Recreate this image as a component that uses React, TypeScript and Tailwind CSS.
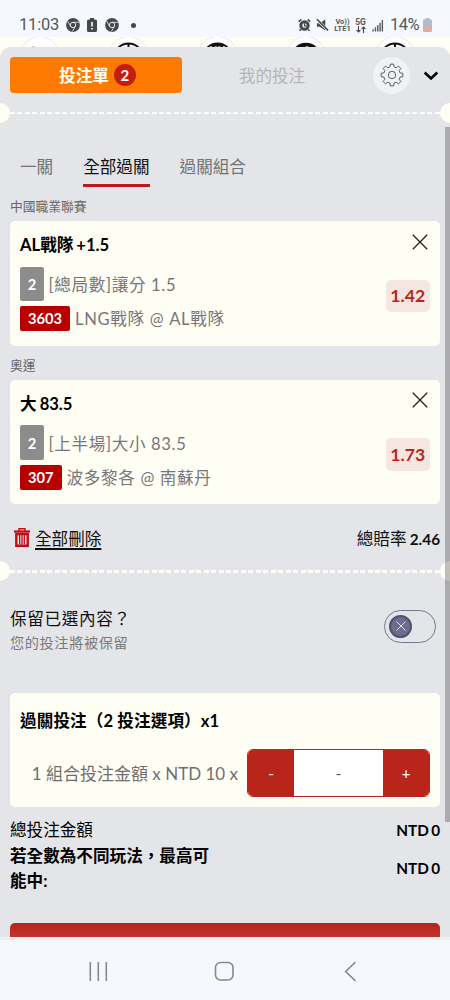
import type { ReactNode } from 'react';

interface Bet {
  league: string;
  pick: string;
  market: string;
  code: string;
  match: string;
  odds: string;
}

const bets: Bet[] = [
  { league: '中國職業聯賽', pick: 'AL戰隊 +1.5', market: '[總局數]讓分 1.5', code: '3603', match: 'LNG戰隊 @ AL戰隊', odds: '1.42' },
  { league: '奧運', pick: '大 83.5', market: '[上半場]大小 83.5', code: '307', match: '波多黎各 @ 南蘇丹', odds: '1.73' },
];

// Eight teeth, four points each: [radius, angle offset in degrees]
const gearPoints = Array.from({ length: 8 }, (_, i) =>
  [[8.4, -14], [11, -9], [11, 9], [8.4, 14]].map(([r, a]) => {
    const rad = ((i * 45 + a) * Math.PI) / 180;
    return `${(12 + r * Math.cos(rad)).toFixed(2)},${(12 + r * Math.sin(rad)).toFixed(2)}`;
  }).join(' ')
).join(' ');

function GearIcon() {
  return (
    <svg width="24" height="24" viewBox="0 0 24 24" fill="none" stroke="#4c4e50" strokeWidth="0.9" strokeLinejoin="round">
      <polygon points={gearPoints} />
      <circle cx="12" cy="12" r="3.7" />
    </svg>
  );
}

function ChromeIcon() {
  return (
    <svg width="14" height="14" viewBox="0 0 14 14" fill="none">
      <circle cx="7" cy="7" r="6.9" fill="#46484b" />
      <circle cx="7" cy="7" r="2.7" stroke="#eef3fa" strokeWidth="0.9" />
      <path d="M7 4.300h6M4.700 8.400 1.700 3.200M9.300 8.400l-3 5.200" stroke="#eef3fa" strokeWidth="0.8" />
    </svg>
  );
}

function StatusBar() {
  return (
    <div className="h-[37px] shrink-0 bg-[#f5f9ff] flex items-center pt-[13px] pl-[19px] pr-[18px] font-[Roboto] text-[16.5px] leading-6 text-[#55575a]">
      <span className="w-[47px] whitespace-nowrap tracking-[-0.2px]">11:03</span>
      <ChromeIcon />
      <svg className="ml-[7px]" width="10" height="14" viewBox="0 0 10 14">
        <path d="M3 0h4v1.500h1.500A1.500 1.500 0 0 1 10 3v9.500A1.500 1.500 0 0 1 8.500 14h-7A1.500 1.500 0 0 1 0 12.500V3a1.500 1.500 0 0 1 1.500-1.500H3z" fill="#46484b" />
        <path d="M5 4v4.500M5 10v1.600" stroke="#fff" strokeWidth="1.600" />
      </svg>
      <span className="ml-[8px]"><ChromeIcon /></span>
      <span className="ml-[12px] size-[5px] rounded-full bg-[#46484b]" />
      <div className="ml-auto flex items-center">
        <svg width="13" height="14" viewBox="0 0 14 14" fill="none" stroke="#46484b">
          <circle cx="7" cy="7.500" r="4" strokeWidth="3.200" />
          <path d="M.8 3.400 3.600 1M13.200 3.400 10.400 1M3 11.500l-1.300 1.700M11 11.500l1.300 1.700" strokeWidth="1.700" />
          <path d="M7 5v3h2.200" strokeWidth="1.200" />
        </svg>
        <svg className="ml-[5px]" width="13" height="14" viewBox="0 0 14 14" fill="#46484b">
          <path d="M1 5h3l6-4v12L4 9H1z" />
          <path d="m1 1 12 12" stroke="#f5f9ff" strokeWidth="3" />
          <path d="m1 .8 12 12" stroke="#46484b" strokeWidth="1.700" />
        </svg>
        <div className="ml-[5px] w-[17px] flex flex-col items-center text-[7.500px] leading-[7.500px] font-bold whitespace-nowrap">
          <span>Vo))</span>
          <span>LTE1</span>
        </div>
        <div className="ml-[4px] w-[11px] flex flex-col items-center text-[8.500px] leading-[8px] font-bold">
          <span>5G</span>
          <svg width="10" height="7" viewBox="0 0 10 7" fill="none" stroke="#46484b" strokeWidth="1.100">
            <path d="M2.500 0v6M.6 4l1.900 2 1.900-2M7.500 7V1M5.600 3l1.900-2 1.900 2" />
          </svg>
        </div>
        <svg className="ml-[6px]" width="12" height="13" viewBox="0 0 13 13" fill="#55575a">
          <path d="M.5 10.500h1.500V13H.5zM3 8.500h1.500V13H3zM5.500 6H7v7H5.500zM8 3.500h1.500V13H8zM10.500 .5H12V13h-1.500z" />
        </svg>
        <span className="ml-[6px] w-[30px] whitespace-nowrap tracking-[-0.500px]">14%</span>
        <svg className="ml-[3px]" width="9" height="14" viewBox="0 0 9 14">
          <path d="M2.500 0h4v1.300h1A1.500 1.500 0 0 1 9 2.800V10H0V2.800a1.500 1.500 0 0 1 1.500-1.500h1z" fill="#b7b9c4" />
          <path d="M0 10h9v2.500A1.500 1.500 0 0 1 7.500 14h-6A1.500 1.500 0 0 1 0 12.500z" fill="#eea896" />
        </svg>
      </div>
    </div>
  );
}

// Tops of the sport icons that peek out above the sheet
function SportStrip() {
  return (
    <svg className="block h-full w-full" viewBox="0 0 450 30" fill="none">
      {[39.5, 128.5, 217.5, 306, 395].map((x) => (
        <circle key={x} cx={x} cy="19" r="19.500" fill="#fff" stroke="#efe6df" />
      ))}
      <path d="M32 9.500h3" stroke="#ccc" />
      <path d="M118.500 10.500a14.500 14.500 0 0 1 20 0M128.500 6.500v4" stroke="#111" strokeWidth="2" />
      <path d="M207.500 10.500a14.500 14.500 0 0 1 20 0M217.500 6.500v4M212 10l5.500-3 5.500 3" stroke="#111" strokeWidth="2" />
      <path d="M296 10.500a14.500 14.500 0 0 1 20 0h-4l-5-2-5 2z" fill="#111" stroke="#111" strokeWidth="1.300" />
      <path d="M385 10.500a14.500 14.500 0 0 1 20 0M395 6.500v4" stroke="#111" strokeWidth="2" />
    </svg>
  );
}

function Separator() {
  return (
    <div className="h-5 shrink-0 flex items-center overflow-hidden">
      <div className="-ml-[10px] size-5 rounded-full bg-[#fffef4]" />
      <div className="h-[2.5px] flex-1 bg-[repeating-linear-gradient(90deg,#fffef8_0_5px,transparent_5px_7.450px)]" />
      <div className="-mr-[10px] size-5 rounded-full bg-[#fffef4]" />
    </div>
  );
}

function Cross({ size, className }: { size: number; className?: string }) {
  return (
    <svg className={className} width={size} height={size} viewBox="0 0 16 16" fill="none" stroke="currentColor" strokeWidth="1.300">
      <path d="m.8.8 14.400 14.400M15.200.8.8 15.200" />
    </svg>
  );
}

function BetCard({ bet }: { bet: Bet }) {
  return (
    <>
      <div className="h-[28px] pt-[3px] text-[12.750px] leading-5 text-[#66686b]">{bet.league}</div>
      <div className="h-[124.500px] rounded-[5px] bg-[#fffef4] pl-[10px] pr-[10px] pt-[10px]">
        <div className="flex justify-between h-[35px]">
          <span className="pt-[1px] text-[16.600px] leading-[26px] font-bold text-black [word-spacing:-1px]">{bet.pick}</span>
          <Cross size={16} className="mt-[2.500px] mr-[2.500px] text-[#222]" />
        </div>
        <div className="flex items-start justify-between">
          <div className="text-[16.600px] text-[#77777a] tracking-[0.650px] whitespace-nowrap">
            <div className="mt-[0.500px] h-[35px] flex items-center">
              <span className="w-6 h-[34.500px] rounded-[2px] bg-[#8c8c8c] text-white text-[14.700px] font-bold flex items-center justify-center tracking-normal">2</span>
              <span className="ml-[4.500px] pt-[3px]">{bet.market}</span>
            </div>
            <div className="h-[25px] mt-[4.500px] flex items-center">
              <span className="h-[25px] px-[8px] rounded-[2px] bg-[#b80000] text-white text-[14.700px] font-bold flex items-center tracking-normal">{bet.code}</span>
              <span className="ml-[5px] pt-[2px]">{bet.match}</span>
            </div>
          </div>
          <span className="mt-[13.500px] w-[44.500px] h-[32.500px] rounded-[5px] bg-[#f6e6e0] text-[#b8261d] text-[17.600px] font-bold flex items-center justify-center pt-[1px]">{bet.odds}</span>
        </div>
      </div>
    </>
  );
}

function Row({ label, children }: { label: ReactNode; children: ReactNode }) {
  return (
    <div className="flex items-center justify-between text-black text-[16.600px] leading-[25.400px]">
      <div className="w-[210px]">{label}</div>
      <span className="text-[15.300px] font-bold [word-spacing:-1.500px]">{children}</span>
    </div>
  );
}

export default function App() {
  return (
    <div className="relative w-[450px] h-[1000px] overflow-hidden flex flex-col bg-[#fffef4] font-[Lato,'Noto_Sans_CJK_TC',sans-serif]">
      <StatusBar />
      <div className="h-[30px] -mb-[20px] shrink-0">
        <SportStrip />
      </div>

      <div className="relative h-[893px] shrink-0 rounded-t-[11px] bg-[#e4e5e8] flex flex-col overflow-hidden">
        <div className="h-[56px] shrink-0 flex items-center pl-[10px] pr-[11px]">
          <button className="w-[172px] h-[36px] rounded-[4px] bg-[#ff7a00] text-[#fffef4] flex items-center justify-center gap-[5px] pl-[3px] text-[16.600px] font-bold">
            <span className="pt-[2px]">投注單</span>
            <span className="size-[22px] rounded-full bg-[#c41c10] text-[15px] flex items-center justify-center">2</span>
          </button>
          <button className="w-[180px] pt-[2px] text-[16.600px] text-[#b3b5b7]">我的投注</button>
          <button className="ml-[11px] size-[37px] rounded-full bg-[#f1f2f4] flex items-center justify-center">
            <GearIcon />
          </button>
          <svg className="ml-auto mt-[2px]" width="16" height="10" viewBox="0 0 16 10" fill="none" stroke="#050505" strokeWidth="2.700">
            <path d="m1.700 1.500 6.300 6 6.300-6" />
          </svg>
        </div>
        <Separator />

        <div className="h-[70px] shrink-0 pt-[31px] pl-[20px] flex gap-[30px] text-[16.600px] leading-[26px] text-[#707275]">
          <span>一關</span>
          <span className="h-[33px] relative text-[#111]">
            全部過關
            <span className="absolute left-0 bottom-0 h-[3.500px] w-full bg-[#b81a20]" />
          </span>
          <span>過關組合</span>
        </div>

        <div className="shrink-0 px-[10px]">
          {bets.map((b) => (
            <div key={b.code} className="h-[158.700px]">
              <BetCard bet={b} />
            </div>
          ))}
        </div>

        <div className="h-[51px] shrink-0 pl-[14px] pr-[10px] pt-[7px] flex items-center text-[16.600px] text-[#111]">
          <svg className="-mt-[3px]" width="16" height="19" viewBox="0 0 16 19" fill="none" stroke="#c20d12">
            <path d="M0 3.500h16" strokeWidth="2.200" />
            <path d="M5 3V.8h6V3" strokeWidth="1.400" />
            <path d="M2.300 6v11.800h11.400V6z" strokeWidth="2.400" />
            <path d="M5.700 6.500v10M8 6.500v10M10.300 6.500v10" strokeWidth="1.300" />
          </svg>
          <span className="ml-[5px] underline underline-offset-[3px] decoration-[1.500px]">全部刪除</span>
          <span className="ml-auto [word-spacing:-1px]">總賠率 <b className="text-[15.300px]">2.46</b></span>
        </div>
        <Separator />

        <div className="h-[112px] shrink-0 pt-[26px] pl-[10px] pr-[14px] flex justify-between">
          <div>
            <div className="text-[16.600px] leading-[25px] text-[#111] tracking-[0.650px]">保留已選內容？</div>
            <div className="text-[14.200px] leading-[22px] text-[#77797c] tracking-[0.600px]">您的投注將被保留</div>
          </div>
          <div className="mt-[2.500px] w-[52px] h-[33px] rounded-full border border-[#77778c] flex items-center pl-[4px]">
            <span className="size-[23px] rounded-full border-2 border-[#505070] bg-[#6c6c8c] flex items-center justify-center text-white">
              <Cross size={10} />
            </span>
          </div>
        </div>

        <div className="h-[114px] shrink-0 mx-[10px] rounded-[5px] bg-[#fffef4] px-[10px] pt-[15px]">
          <div className="h-[41px] text-[16.600px] leading-[26px] font-bold text-black tracking-[0.100px]">過關投注（2 投注選項）x1</div>
          <div className="flex items-center justify-end">
            <span className="mr-[9px] pt-[1px] text-[17px] text-[#6f6f6f] whitespace-nowrap">1 組合投注金額 x NTD 10 x</span>
            <div className="w-[183px] h-[48px] rounded-[6px] border border-[#b8261b] bg-white overflow-hidden flex text-[15px] text-[#555]">
              <button className="w-[46px] bg-[#b8261b] text-white">-</button>
              <span className="flex-1 flex items-center justify-center text-[16px]">-</span>
              <button className="w-[46px] bg-[#b8261b] text-white">+</button>
            </div>
          </div>
        </div>

        <div className="h-[116px] shrink-0 px-[10px] pt-[11px]">
          <Row label="總投注金額">NTD 0</Row>
          <Row label={<b>若全數為不同玩法，最高可能中:</b>}>NTD 0</Row>
        </div>

        <div className="h-[14px] shrink-0 mx-[10px] rounded-t-[5px] bg-linear-to-b from-[#b4241a] to-[#c2352a]" />
        <div className="h-[4px] shrink-0 bg-[#eceef0]" />

        <div className="absolute right-0 top-[80px] w-[5px] h-[695px] bg-black/25" />
      </div>

      <div className="h-[60px] shrink-0 bg-[#f5f9ff]">
        <svg className="block" width="450" height="60" viewBox="0 0 450 60" fill="none" stroke="#85878b" strokeWidth="1.600">
          <path d="M90.300 22v19M98.300 22v19M106.300 22v19" />
          <rect x="215.500" y="22.500" width="17.500" height="17.500" rx="5" />
          <path d="m355.500 22-9.800 9.500 9.800 9.500" />
        </svg>
      </div>
    </div>
  );
}
